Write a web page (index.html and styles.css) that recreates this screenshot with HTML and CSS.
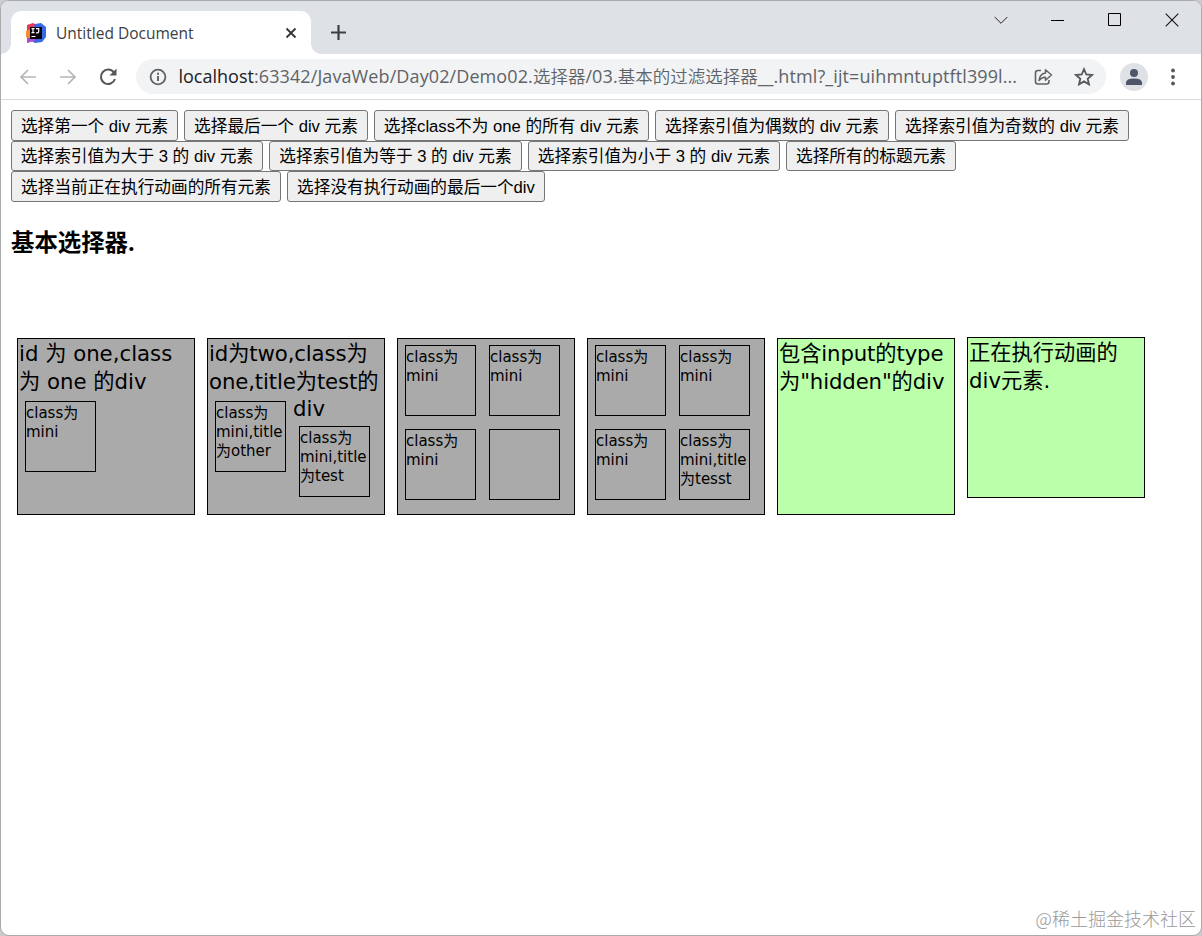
FILE: index.html
```html
<!DOCTYPE html>
<html lang="zh-CN">
<head>
<meta charset="utf-8">
<title>Untitled Document</title>
<link rel="stylesheet" href="styles.css">
</head>
<body>
<div class="window">
  <header class="tabstrip">
    <div class="tab">
      <svg class="favicon" width="22" height="22" viewBox="0 0 22 22"><path d="M2 3L8 1l6 3-3 12-9-1z" fill="#e9345b"/><path d="M1 9l5-2 3 10-4 1-1 3-2-1 1-3-2-2z" fill="#f58b32"/><path d="M10 2l6-1 5 4v10l-4 5-7 1-5-3z" fill="#3569e8"/><path d="M2 16l8-1v4l-5 1-3 1z" fill="#a94bd0"/><path d="M5 5h12v12H5z" fill="#080408"/><path d="M6.500 6.700h3M8 6.700v4M6.500 10.700h3M11 6.700h2.700v2.800q0 1.300-1.300 1.300H11M6.500 14.500h4" fill="none" stroke="#fff" stroke-width="1.200"/></svg>
      <span class="tab-title">Untitled Document</span>
      <svg class="tab-close" width="12" height="12" viewBox="0 0 12 12"><path d="M1.500 1.500l9 9M10.500 1.500l-9 9" stroke="#333639" stroke-width="1.800"/></svg>
    </div>
    <svg class="new-tab" width="16" height="16" viewBox="0 0 16 16"><path d="M8.500 1v15M1 8.500h15" stroke="#3c4043" stroke-width="2.200"/></svg>
    <div class="controls">
      <svg width="14" height="14" viewBox="0 0 14 14"><path d="M.7 4L7 10.300 13.300 4" fill="none" stroke="#222" stroke-width="1"/></svg>
      <svg width="14" height="14" viewBox="0 0 14 14"><path d="M0 7.500h13" stroke="#000"/></svg>
      <svg width="14" height="14" viewBox="0 0 14 14"><path d="M.5.5h12v12H.5z" fill="none" stroke="#000"/></svg>
      <svg width="14" height="14" viewBox="0 0 14 14"><path d="M.7.7l12.600 12.600M13.300.7L.7 13.300" stroke="#111" stroke-width="1.100"/></svg>
    </div>
  </header>
  <nav class="toolbar">
    <svg class="back" width="18" height="16" viewBox="0 0 18 16"><path d="M17 8H2M9 1L2 8l7 7" fill="none" stroke="#b4b6b8" stroke-width="1.700"/></svg>
    <svg class="forward" width="18" height="16" viewBox="0 0 18 16"><path d="M1 8h15M9 1l7 7-7 7" fill="none" stroke="#b4b6b8" stroke-width="1.700"/></svg>
    <svg class="reload" width="18" height="18" viewBox="0 0 18 18"><path d="M15 4.600A7.200 7.200 0 1 0 16 11" fill="none" stroke="#55585b" stroke-width="2"/><path d="M17.500.5v7h-7z" fill="#55585b"/></svg>
    <div class="omnibox">
      <svg class="info" width="18" height="18" viewBox="0 0 18 18"><circle cx="9" cy="9" r="7.400" fill="none" stroke="#5f6368" stroke-width="1.800"/><path d="M9 8v5M9 4.800v1.900" stroke="#5f6368" stroke-width="1.900"/></svg>
      <span class="url"><span class="host">localhost</span><span class="path">:63342/JavaWeb/Day02/Demo02.</span><span class="cjk">选择器</span><span class="path">/03.</span><span class="cjk">基本的过滤选择器</span><span>__</span><span class="path">.html?_ijt=uihmntuptftl399l...</span></span>
      <svg class="share" width="20" height="18" viewBox="0 0 20 18"><path d="M7 2.500H4Q1.500 2.500 1.500 5v8.500Q1.500 16 4 16h8.500q2.500 0 2.500-2.500V12" fill="none" stroke="#5f6368" stroke-width="1.600"/><path d="M11.500 1.800L17.500 7l-6 5.200V9.200Q7.500 9 5 12.500 5.800 5.500 11.500 4.900z" fill="none" stroke="#5f6368" stroke-width="1.500" stroke-linejoin="round"/></svg>
      <svg class="star" width="20" height="19" viewBox="0 0 20 19"><path d="M10 2.200l2.300 5.300 5.700.5-4.300 3.800 1.300 5.600-5-3-5 3 1.300-5.600L2 8l5.700-.5z" fill="none" stroke="#55585b" stroke-width="1.800"/></svg>
    </div>
    <svg class="avatar" width="28" height="28" viewBox="0 0 28 28"><circle cx="14" cy="14" r="14" fill="#dee1e6"/><circle cx="14" cy="10" r="4" fill="#4f5669"/><path d="M6 22v-2.200q0-4.300 8-4.300t8 4.300V22z" fill="#4f5669"/></svg>
    <svg class="menu" width="4" height="18" viewBox="0 0 4 18"><g fill="#55585b"><circle cx="2" cy="2.500" r="1.900"/><circle cx="2" cy="9" r="1.900"/><circle cx="2" cy="15.500" r="1.900"/></g></svg>
  </nav>
  <main class="page">
    <div class="button-row">
      <button class="w167">选择第一个 div 元素</button><button class="w184">选择最后一个 div 元素</button><button class="w275">选择class不为 one 的所有 div 元素</button><button class="w234">选择索引值为偶数的 div 元素</button><button class="w234">选择索引值为奇数的 div 元素</button>
    </div>
    <div class="button-row middle">
      <button class="w252">选择索引值为大于 3 的 div 元素</button><button class="w253">选择索引值为等于 3 的 div 元素</button><button class="w252">选择索引值为小于 3 的 div 元素</button><button class="w170">选择所有的标题元素</button>
    </div>
    <div class="button-row">
      <button class="w270">选择当前正在执行动画的所有元素</button><button class="w258">选择没有执行动画的最后一个div</button>
    </div>
    <h3>基本选择器.</h3>
    <section class="boxes">
      <div class="box">
        <p class="line">id 为 one,class</p>
        <p class="line">为 one 的div</p>
        <div class="minis"><div class="mini">class为<br>mini</div></div>
      </div>
      <div class="box">
        <p class="line tight">id为two,class为</p>
        <p class="line tight">one,title为test的</p>
        <div class="minis"><div class="mini">class为<br>mini,title<br>为other</div>
          <div class="stack"><p class="line short">div</p><div class="mini">class为<br>mini,title<br>为test</div></div></div>
      </div>
      <div class="box"><div class="minis">
        <div class="mini">class为<br>mini</div><div class="mini">class为<br>mini</div><div class="mini">class为<br>mini</div><div class="mini"></div>
      </div></div>
      <div class="box"><div class="minis">
        <div class="mini">class为<br>mini</div><div class="mini">class为<br>mini</div><div class="mini">class为<br>mini</div><div class="mini">class为<br>mini,title<br>为tesst</div>
      </div></div>
      <div class="box green"><p class="line tight">包含input的type</p><p class="line tight">为"hidden"的div</p></div>
      <div class="box green moving"><p class="line">正在执行动画的</p><p class="line">div元素.</p></div>
    </section>
  </main>
  <footer class="watermark">@稀土掘金技术社区</footer>
</div>
</body>
</html>
```
FILE: styles.css
```css
* { box-sizing: border-box; }
body { margin: 0; height: 936px; overflow: hidden; background: #c9cbce; font-family: "Liberation Sans", "Noto Sans CJK SC", sans-serif; }
p, h3 { margin: 0; }
svg { display: block; flex: none; }
.window { display: flex; flex-direction: column; width: 1202px; height: 936px; overflow: hidden; border: 1px solid #a9abad; border-radius: 9px; background: #fff; }
.tabstrip { display: flex; flex: none; height: 53px; background: #dee1e6; }
.tab { position: relative; display: flex; align-items: center; width: 300px; height: 43px; margin: 10px 0 0 10px; padding: 0 14px; border-radius: 10px 10px 0 0; background: #fff; }
.tab::before, .tab::after { content: ""; position: absolute; bottom: 0; width: 10px; height: 10px; }
.tab::before { left: -10px; background: radial-gradient(circle at 0 0, transparent 9.5px, #fff 10px); }
.tab::after { right: -10px; background: radial-gradient(circle at 100% 0, transparent 9.5px, #fff 10px); }
.tab-title { margin-left: 9px; color: #3c4043; font: 15.5px/22px "Open Sans", "Noto Sans", sans-serif; white-space: nowrap; }
.tab-close { margin-left: auto; }
.new-tab { margin: 23px 0 0 19px; }
.controls { display: flex; gap: 43px; margin: 12px 22px 0 auto; }
.toolbar { display: flex; flex: none; align-items: center; height: 46px; border-bottom: 1px solid #d7dadd; }
.back { margin-left: 18px; }
.forward { margin-left: 22px; }
.reload { margin-left: 22px; }
.omnibox { display: flex; align-items: center; width: 970px; height: 35px; margin-left: 19px; padding-left: 13px; border-radius: 18px; background: #f1f3f4; }
.url { display: flex; width: 841px; margin: 0 0 1px 11.5px; color: #5f6368; font: 18px/26px "Open Sans", "Noto Sans CJK SC", sans-serif; white-space: nowrap; }
.host { color: #202124; }
.path { letter-spacing: 0.1px; }
.cjk { font-size: 17.5px; font-weight: 350; }
.share { margin-left: 14.5px; }
.star { margin-left: 20px; }
.avatar { margin-left: 14px; }
.menu { margin-left: 23px; }
.page { flex: 1; padding: 10px 10px 0; }
.button-row { display: flex; gap: 6px; height: 31px; }
.middle { height: 30px; }
button { height: 100%; padding: 2px 0 0; border: 1px solid #767676; border-radius: 3px; background: #efefef; color: #000; font: 16.67px/24px "Liberation Sans", "Noto Sans CJK SC", sans-serif; white-space: nowrap; }
.w167 { width: 167px; }
.w170 { width: 170px; }
.w184 { width: 184px; }
.w234 { width: 234px; }
.w252 { width: 252px; }
.w253 { width: 253px; }
.w258 { width: 258px; }
.w270 { width: 270px; }
.w275 { width: 275px; }
h3 { margin-top: 24px; font: bold 23.4px/32px "Open Sans", "Noto Sans CJK SC", sans-serif; }
.boxes { display: flex; gap: 12px; margin: 80px 0 0 6px; }
.box { flex: none; width: 178px; height: 177px; padding: 0 1px; border: 1px solid #000; background: #aaa; font-family: "DejaVu Sans", "Noto Sans CJK SC", sans-serif; }
.green { background: #bfa; }
.moving { height: 161px; margin-top: -1px; }
.line { height: 28px; padding-top: 1px; font-size: 21.25px; line-height: 28px; white-space: nowrap; }
.tight { letter-spacing: -0.12px; }
.short { height: 25px; line-height: 25px; }
.minis { display: flex; flex-wrap: wrap; }
.mini { width: 71px; height: 71px; margin: 6px 7px 7px 6px; padding-top: 2px; border: 1px solid #000; font-size: 15px; line-height: 19px; white-space: nowrap; }
.watermark { align-self: flex-end; margin: 0 5px 3px 0; color: #999; font: 300 18px/27px "Noto Sans CJK SC", sans-serif; white-space: nowrap; }
```
